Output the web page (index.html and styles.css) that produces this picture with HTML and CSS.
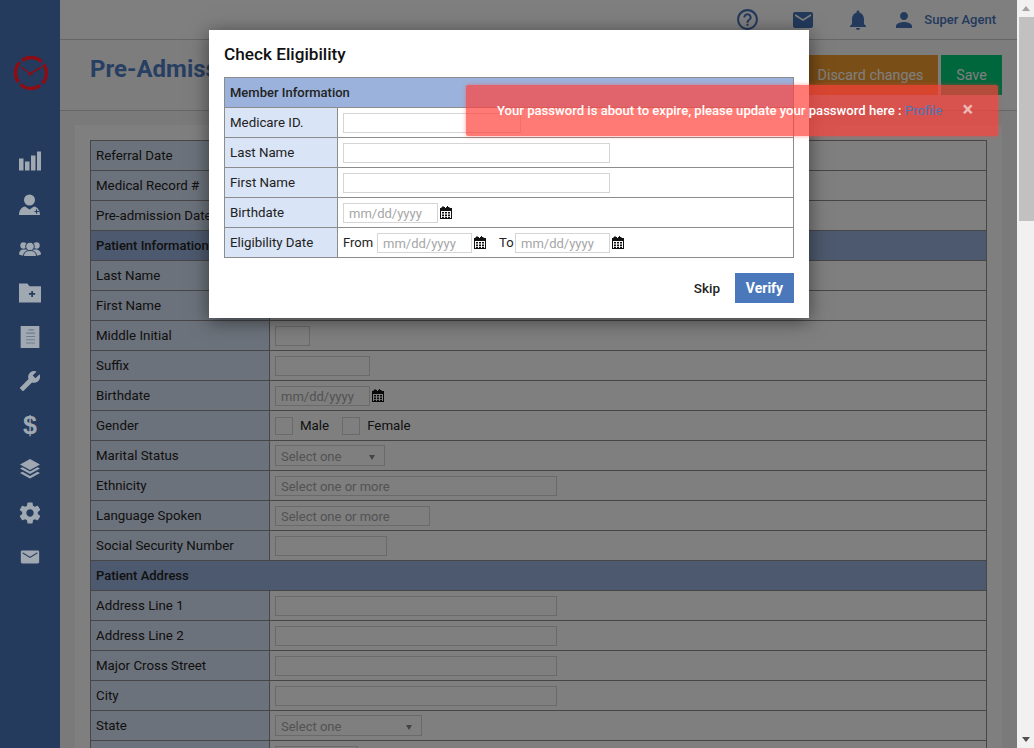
FILE: index.html
```html
<!DOCTYPE html>
<html lang="en">
<head>
    <meta charset="UTF-8">
    <meta name="viewport" content="width=device-width, initial-scale=1.0">
    <title>Pre-Admission</title>
    <link rel="stylesheet" href="styles.css">
</head>
<body>

    <svg class="sprites" width="0" height="0">
        <symbol id="cal" viewBox="0 0 12 13">
            <path d="M0 2h1.500V1h1v-1h1v1h1.500v1h1V1h1v-1h1v1h1.500v1H12v11H0zM1 5v7h10V5z" fill-rule="evenodd"/>
            <path d="M2 6h2v1.500H2zM5 6h2v1.500H5zM8 6h2v1.500H8zM2 8.500h2V10H2zM5 8.500h2V10H5zM8 8.500h2V10H8zM2 10.700h2V12H2zM5 10.700h2V12H5zM8 10.700h2V12H8z"/>
        </symbol>
    </svg>

    <div class="window">
        <div class="viewport">
            <nav class="sidebar">
                <svg class="logo" width="36" height="36" viewBox="0 0 36 36" fill="none" stroke="#8e0c14">
                    <circle cx="18" cy="18" r="15.500" stroke-width="3.400" stroke-dasharray="21.350 3" stroke-dashoffset="10"/>
                    <path d="M8 12 19.500 20M28.500 12 15 20" stroke-width="1.500"/>
                </svg>
                <ul class="nav-list">
                    <li><svg class="nav-icon" viewBox="0 0 22 19"><path d="M0 7h4.500v12H0zM6 10h4.500v9H6zM12 4h4.500v15H12zM18 0h4v19h-4z"/></svg></li>
                    <li><svg class="nav-icon" viewBox="0 0 22 22"><circle cx="10.500" cy="6" r="5.500"/><path d="M0 21c0-5 3-8 6-8.500l4.500 3 4.500-3c3 .5 6 3.500 6 8.500z"/><path class="nav-cut" d="M15.500 17h1.500v-1.700h1.100V17h1.700v1.100h-1.700v1.700H17v-1.700h-1.500z"/></svg></li>
                    <li><svg class="nav-icon" viewBox="0 0 22 15"><circle cx="4.500" cy="4" r="3.200"/><circle cx="17.500" cy="4" r="3.200"/><path d="M0 13c0-3 1.500-5 4-5h13c2.500 0 5 2 5 5l-3 1H3z"/><circle class="nav-ring" cx="11" cy="5" r="4.300"/><path class="nav-ring" d="M4.500 15c0-4 2.500-6 6.500-6s6.500 2 6.500 6z"/></svg></li>
                    <li><svg class="nav-icon" viewBox="0 0 21 18"><path d="M0 0h8l2 2.500h11V18H0z"/><path class="nav-cut" d="M9.500 9h2.200V7h1.600v2h2.100v1.600h-2.100v2.100h-1.600v-2.100H9.500z"/></svg></li>
                    <li><svg class="nav-icon" viewBox="0 0 17 20"><path d="M0 0h17v20H0z"/><path class="nav-line" d="M7 3h5v1H7zM5 6h8v1H5zM5 9h8v1H5zM5 12h8v1H5zM5 15h8v1H5z"/></svg></li>
                    <li><svg class="nav-icon" viewBox="0 0 24 24"><path transform="matrix(-1 0 0 1 24 0)" d="M22.700 19l-9.100-9.100c.9-2.300.4-5-1.500-6.900-2-2-5-2.400-7.400-1.300L9 6 6 9 1.600 4.700C.4 7.100.9 10.100 2.900 12.100c1.900 1.900 4.600 2.400 6.900 1.500l9.100 9.100c.4.400 1 .4 1.400 0l2.300-2.300c.5-.4.500-1.100.1-1.400z"/></svg></li>
                    <li class="nav-dollar">$</li>
                    <li><svg class="nav-icon" viewBox="1 1 22 22"><path d="M12 2 22 7.500 12 13 2 7.500zM2 11.500l2.500-1.300 7.500 4.300 7.500-4.300 2.500 1.300L12 17zM2 16l2.500-1.300L12 19l7.500-4.300L22 16l-10 5.500z"/></svg></li>
                    <li><svg class="nav-icon" viewBox="1.500 1.500 21 21"><path d="M19.430 12.980c.04-.32.07-.64.07-.98s-.03-.66-.07-.98l2.110-1.650c.19-.15.24-.42.12-.64l-2-3.460c-.12-.22-.39-.3-.61-.22l-2.490 1c-.52-.4-1.080-.73-1.690-.98l-.38-2.650C14.460 2.180 14.250 2 14 2h-4c-.25 0-.46.18-.49.42l-.38 2.650c-.61.25-1.170.59-1.690.98l-2.490-1c-.23-.09-.49 0-.61.22l-2 3.460c-.13.22-.07.49.12.64l2.110 1.650c-.04.32-.07.65-.07.98s.03.66.07.98l-2.110 1.650c-.19.15-.24.42-.12.64l2 3.460c.12.22.39.3.61.22l2.490-1c.52.4 1.080.73 1.690.98l.38 2.650c.03.24.24.42.49.42h4c.25 0 .46-.18.49-.42l.38-2.650c.61-.25 1.170-.59 1.690-.98l2.490 1c.23.09.49 0 .61-.22l2-3.460c.12-.22.07-.49-.12-.64l-2.110-1.650zM12 15.500c-1.930 0-3.500-1.570-3.500-3.500s1.570-3.500 3.500-3.500 3.500 1.570 3.500 3.500-1.570 3.500-3.500 3.500z"/></svg></li>
                    <li><svg class="nav-icon" viewBox="0 0 24 24"><path d="M20.500 5h-17C2.600 5 2 5.600 2 6.500v11c0 .9.600 1.500 1.500 1.500h17c.9 0 1.500-.6 1.500-1.500v-11c0-.9-.6-1.500-1.500-1.500zm-.5 3.200-8 5-8-5V6.800l8 5 8-5z"/></svg></li>
                </ul>
            </nav>

            <main class="main">
                <header class="topbar">
                    <svg class="top-icon help" viewBox="0 0 24 24"><path d="M11 18h2v-2h-2v2zm1-16C6.480 2 2 6.480 2 12s4.480 10 10 10 10-4.480 10-10S17.520 2 12 2zm0 18c-4.410 0-8-3.590-8-8s3.590-8 8-8 8 3.590 8 8-3.590 8-8 8zm0-14c-2.210 0-4 1.790-4 4h2c0-1.100.9-2 2-2s2 .9 2 2c0 2-3 1.750-3 5h2c0-2.250 3-2.500 3-5 0-2.210-1.790-4-4-4z"/></svg>
                    <svg class="top-icon" viewBox="0 0 24 24"><path d="M20 4H4c-1.100 0-1.990.9-1.990 2L2 18c0 1.100.9 2 2 2h16c1.100 0 2-.9 2-2V6c0-1.100-.9-2-2-2zm0 4l-8 5-8-5V6l8 5 8-5v2z"/></svg>
                    <svg class="top-icon bell" viewBox="0 0 24 24"><path d="M12 22c1.100 0 2-.9 2-2h-4c0 1.100.89 2 2 2zm6-6v-5c0-3.070-1.640-5.640-4.500-6.320V4c0-.83-.67-1.500-1.500-1.500s-1.500.67-1.500 1.500v.68C7.630 5.360 6 7.920 6 11v5l-2 2v1h16v-1l-2-2z"/></svg>
                    <span class="user">
                        <svg class="top-icon" viewBox="0 0 24 24"><path d="M12 12c2.210 0 4-1.790 4-4s-1.790-4-4-4-4 1.790-4 4 1.790 4 4 4zm0 2c-2.670 0-8 1.340-8 4v2h16v-2c0-2.660-5.330-4-8-4z"/></svg>
                        Super Agent
                    </span>
                </header>

                <div class="titlebar">
                    <h1>Pre-Admission</h1>
                    <div class="actions">
                        <button class="btn btn-discard" type="button">Discard changes</button>
                        <button class="btn btn-save" type="button">Save</button>
                    </div>
                </div>

                <div class="content">
                    <div class="panel">
                        <table class="form-table">
                            <tr><td class="lbl">Referral Date</td><td><input class="w95" type="text" placeholder="mm/dd/yyyy"></td></tr>
                            <tr><td class="lbl">Medical Record #</td><td><input class="w112" type="text"></td></tr>
                            <tr><td class="lbl">Pre-admission Date</td><td><input class="w95" type="text" placeholder="mm/dd/yyyy"></td></tr>
                            <tr><td class="section" colspan="2">Patient Information</td></tr>
                            <tr><td class="lbl">Last Name</td><td><input class="w282" type="text"></td></tr>
                            <tr><td class="lbl">First Name</td><td><input class="w282" type="text"></td></tr>
                            <tr><td class="lbl">Middle Initial</td><td><input class="w35" type="text"></td></tr>
                            <tr><td class="lbl">Suffix</td><td><input class="w95" type="text"></td></tr>
                            <tr><td class="lbl">Birthdate</td><td><div class="line"><input class="w95" type="text" placeholder="mm/dd/yyyy"><svg class="cal"><use href="#cal"/></svg></div></td></tr>
                            <tr><td class="lbl">Gender</td><td><div class="line"><span class="check"></span><span class="check-label">Male</span><span class="check"></span><span class="check-label">Female</span></div></td></tr>
                            <tr><td class="lbl">Marital Status</td><td><div class="select w110">Select one<span class="caret"></span></div></td></tr>
                            <tr><td class="lbl">Ethnicity</td><td><input class="w282" type="text" placeholder="Select one or more"></td></tr>
                            <tr><td class="lbl">Language Spoken</td><td><input class="w155" type="text" placeholder="Select one or more"></td></tr>
                            <tr><td class="lbl">Social Security Number</td><td><input class="w112" type="text"></td></tr>
                            <tr><td class="section" colspan="2">Patient Address</td></tr>
                            <tr><td class="lbl">Address Line 1</td><td><input class="w282" type="text"></td></tr>
                            <tr><td class="lbl">Address Line 2</td><td><input class="w282" type="text"></td></tr>
                            <tr><td class="lbl">Major Cross Street</td><td><input class="w282" type="text"></td></tr>
                            <tr><td class="lbl">City</td><td><input class="w282" type="text"></td></tr>
                            <tr><td class="lbl">State</td><td><div class="select w147">Select one<span class="caret"></span></div></td></tr>
                            <tr><td class="lbl"></td><td><input class="w83" type="text"></td></tr>
                        </table>
                    </div>
                </div>
            </main>

            <div class="backdrop"></div>

            <div class="modal">
                <h2>Check Eligibility</h2>
                <table class="modal-table">
                    <tr><td class="section" colspan="2">Member Information</td></tr>
                    <tr><td class="lbl">Medicare ID.</td><td><input class="w178" type="text"></td></tr>
                    <tr><td class="lbl">Last Name</td><td><input class="w267" type="text"></td></tr>
                    <tr><td class="lbl">First Name</td><td><input class="w267" type="text"></td></tr>
                    <tr><td class="lbl">Birthdate</td><td><div class="line"><input class="w95" type="text" placeholder="mm/dd/yyyy"><svg class="cal"><use href="#cal"/></svg></div></td></tr>
                    <tr>
                        <td class="lbl">Eligibility Date</td>
                        <td>
                            <div class="line">
                                <span class="from">From</span><input class="w95" type="text" placeholder="mm/dd/yyyy"><svg class="cal"><use href="#cal"/></svg>
                                <span class="to">To</span><input class="w95" type="text" placeholder="mm/dd/yyyy"><svg class="cal"><use href="#cal"/></svg>
                            </div>
                        </td>
                    </tr>
                </table>
                <div class="modal-actions">
                    <button class="btn-skip" type="button">Skip</button>
                    <button class="btn-verify" type="button">Verify</button>
                </div>
            </div>

            <div class="toast">
                <span>Your password is about to expire, please update your password here : <a href="#">Profile</a></span>
                <span class="toast-close">&#215;</span>
            </div>
        </div>

        <div class="scrollbar">
            <div class="arrow-up"></div>
            <div class="thumb"></div>
            <div class="arrow-down"></div>
        </div>
    </div>

</body>
</html>
```

FILE: styles.css
```css
* {
    box-sizing: border-box;
}

html, body {
    margin: 0;
    padding: 0;
    height: 100%;
    overflow: hidden;
}

body {
    font-family: Roboto, "Liberation Sans", sans-serif;
    font-size: 13.3px;
    color: #222;
}

.sprites {
    display: block;
    height: 0;
}

.window {
    display: flex;
    height: 748px;
}

.viewport {
    position: relative;
    flex: 1;
    display: flex;
    min-width: 0;
    overflow: hidden;
}

/* sidebar sits above the backdrop in the original, so colours are already dim */
.sidebar {
    width: 60px;
    flex-shrink: 0;
    background-color: #243b5e;
    display: flex;
    flex-direction: column;
    align-items: center;
}

.logo {
    margin-top: 55px;
    margin-left: 2px;
}

.nav-list {
    list-style: none;
    margin: 48px 0 0;
    padding: 0;
    display: flex;
    flex-direction: column;
    align-items: center;
}

.nav-list li {
    height: 44px;
    width: 60px;
    display: flex;
    align-items: center;
    justify-content: center;
}

.nav-icon {
    width: 22px;
    height: 22px;
    fill: #a0a8b2;
}

.nav-cut {
    fill: #243b5e;
}

.nav-line {
    fill: #6f7c8e;
}

.nav-ring {
    stroke: #243b5e;
    stroke-width: 1;
}

.nav-dollar {
    font-family: "Liberation Sans", sans-serif;
    font-weight: bold;
    font-size: 25px;
    color: #a0a8b2;
}

.main {
    flex: 1;
    min-width: 0;
    background-color: #f5f5f5;
}

.topbar {
    height: 40px;
    background-color: #fff;
    border-bottom: 1px solid #ccc;
    display: flex;
    align-items: center;
    justify-content: flex-end;
    padding-right: 21px;
    color: #4674b8;
}

.top-icon {
    width: 24px;
    height: 24px;
    fill: #4674b8;
    margin-right: 31px;
}

.help {
    width: 25px;
    height: 25px;
}

.bell {
    margin-right: 22px;
}

.user {
    display: flex;
    align-items: center;
    font-weight: 500;
    font-size: 13px;
}

.user .top-icon {
    margin-right: 8px;
}

.titlebar {
    height: 71px;
    background-color: #fbfbfb;
    border-bottom: 1px solid #ccc;
    display: flex;
    align-items: flex-start;
    justify-content: space-between;
    padding: 15px 15px 0 30px;
}

.titlebar h1 {
    margin: 0;
    font-size: 24px;
    line-height: 28px;
    font-weight: bold;
    color: #4f7fc4;
}

.actions {
    display: flex;
    gap: 3px;
}

.btn {
    height: 40px;
    border: none;
    color: #fff;
    font-family: inherit;
    font-size: 14.3px;
    cursor: pointer;
}

.btn-discard {
    width: 135px;
    background-color: #f59d2f;
}

.btn-save {
    width: 61px;
    background-color: #00cc78;
}

.content {
    padding: 14px 15px 0;
}

.panel {
    background-color: #fff;
    padding: 15px;
}

table {
    border-collapse: collapse;
    width: 100%;
}

td {
    height: 30px;
    border: 1px solid #8c8c8c;
    padding: 0 5px;
}

.lbl {
    background-color: #d9e4f6;
}

.section {
    background-color: #9bb3dc;
    font-size: 13px;
    font-weight: 500;
}

.form-table .lbl {
    width: 179px;
}

.modal-table .lbl {
    width: 113px;
}

input {
    display: block;
    height: 20px;
    border: 1px solid #d5d5d5;
    padding: 1px 5px 0;
    font-family: inherit;
    font-size: 13px;
    background-color: #fff;
}

input::placeholder {
    color: #a6a6a6;
    opacity: 1;
}

.w35 { width: 35px; }
.w83 { width: 83px; }
.w95 { width: 95px; }
.w110 { width: 110px; }
.w112 { width: 112px; }
.w147 { width: 147px; }
.w155 { width: 155px; }
.w178 { width: 178px; }
.w267 { width: 267px; }
.w282 { width: 282px; }

.line {
    display: flex;
    align-items: center;
}

.cal {
    width: 12px;
    height: 13px;
    margin-left: 2px;
    fill: #111;
}

.from {
    width: 34px;
    font-size: 13px;
}

.to {
    margin-left: 13px;
    width: 16px;
    font-size: 13px;
}

.check {
    width: 18px;
    height: 18px;
    border: 1px solid #d5d5d5;
    background-color: #fff;
}

.check-label {
    margin: 0 13px 0 7px;
}

.select {
    position: relative;
    height: 21px;
    border: 1px solid #d5d5d5;
    background-color: #fff;
    padding: 1px 0 0 5px;
    font-size: 13px;
    line-height: 19px;
    color: #a6a6a6;
}

.caret {
    position: absolute;
    right: 9px;
    top: 9px;
    border-left: 3.5px solid transparent;
    border-right: 3.5px solid transparent;
    border-top: 5px solid #888;
}

.backdrop {
    position: absolute;
    top: 0;
    right: 0;
    bottom: 0;
    left: 60px;
    background-color: rgba(0, 0, 0, 0.5);
}

.modal {
    position: absolute;
    left: 209px;
    top: 30px;
    width: 600px;
    height: 288px;
    background-color: #fff;
    padding: 15px;
    box-shadow: 0 3px 18px rgba(0, 0, 0, 0.5);
}

.modal h2 {
    margin: 0 0 13px;
    font-size: 17.2px;
    line-height: 19px;
    font-weight: 500;
    color: #111;
}

.modal-actions {
    display: flex;
    justify-content: flex-end;
    align-items: center;
    gap: 15px;
    margin-top: 15px;
}

.btn-skip {
    border: none;
    background: none;
    padding: 0;
    font-family: inherit;
    font-size: 13.5px;
    font-weight: 500;
    color: #222;
}

.btn-verify {
    width: 59px;
    height: 30px;
    border: none;
    background-color: #4a78bb;
    color: #fff;
    font-family: inherit;
    font-size: 14px;
    font-weight: bold;
}

.toast {
    position: absolute;
    left: 466px;
    top: 85px;
    width: 532px;
    height: 51px;
    padding-left: 31px;
    border-radius: 2px;
    background-color: rgba(255, 65, 59, 0.7);
    box-shadow: 0 0 4px rgba(255, 65, 59, 0.5);
    display: flex;
    align-items: center;
    color: #fff;
    font-size: 13.1px;
    font-weight: 500;
}

.toast a {
    color: #4a78bb;
    font-weight: 400;
    text-decoration: none;
}

.toast-close {
    position: absolute;
    right: 25px;
    top: 12px;
    font-size: 20px;
    line-height: 24px;
    font-weight: bold;
    opacity: 0.6;
}

.scrollbar {
    width: 17px;
    flex-shrink: 0;
    background-color: #f1f1f1;
    display: flex;
    flex-direction: column;
    align-items: center;
}

.arrow-up,
.arrow-down {
    width: 0;
    height: 0;
    border-left: 4px solid transparent;
    border-right: 4px solid transparent;
}

.arrow-up {
    margin: 6px 0 6px;
    border-bottom: 5px solid #a3a3a3;
}

.thumb {
    width: 15px;
    height: 204px;
    margin-left: 1px;
    background-color: #c1c1c1;
}

.arrow-down {
    margin-top: auto;
    margin-bottom: 6px;
    border-top: 5px solid #505050;
}
```
